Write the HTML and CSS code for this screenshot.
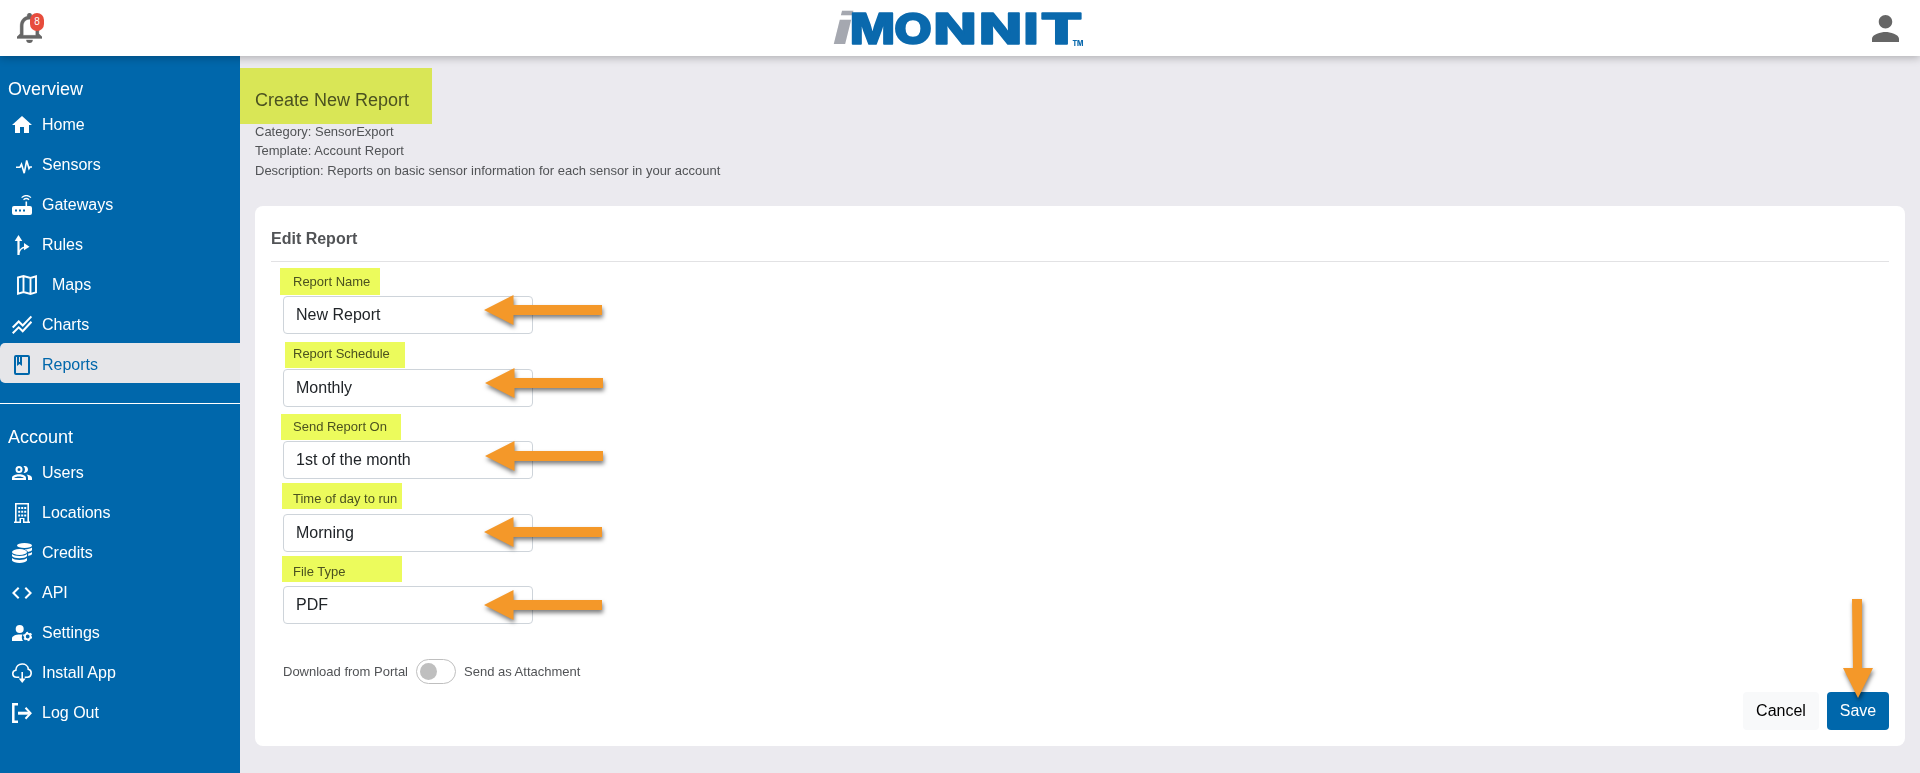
FILE: index.html
```html
<!DOCTYPE html>
<html lang="en">
<head>
  <meta charset="UTF-8" />
  <meta name="viewport" content="width=device-width, initial-scale=1" />
  <title>iMonnit - Create New Report</title>
  <link rel="stylesheet" href="styles.css">
</head>
<body>

  <header class="topbar">
    <div class="alerts">
      <svg class="bell" viewBox="4 2.5 16 19.5" preserveAspectRatio="none"><path d="M12 22c1.1 0 2-.9 2-2h-4c0 1.1.9 2 2 2zm6-6v-5c0-3.07-1.63-5.64-4.5-6.32V4c0-.83-.67-1.5-1.5-1.5s-1.5.67-1.5 1.5v.68C7.64 5.36 6 7.92 6 11v5l-2 2v1h16v-1l-2-2zm-2 1H8v-6c0-2.48 1.51-4.5 4-4.5s4 2.02 4 4.5v6z"/></svg>
      <span class="badge">8</span>
    </div>
    <svg class="logo" viewBox="0 0 252 40">
      <text class="logo-i" transform="translate(0 35) skewX(-14)" x="-4" y="0" textLength="23" lengthAdjust="spacingAndGlyphs">i</text>
      <g class="logo-word">
        <text x="18" y="35" textLength="45" lengthAdjust="spacingAndGlyphs">M</text>
        <text x="62" y="35" textLength="38" lengthAdjust="spacingAndGlyphs">O</text>
        <text x="101.500" y="35" textLength="43" lengthAdjust="spacingAndGlyphs">N</text>
        <text x="147" y="35" textLength="43" lengthAdjust="spacingAndGlyphs">N</text>
        <text x="191.500" y="35" textLength="15" lengthAdjust="spacingAndGlyphs">I</text>
        <text x="208.500" y="35" textLength="42" lengthAdjust="spacingAndGlyphs">T</text>
      </g>
      <text class="logo-tm" x="240.500" y="36.5" textLength="11" lengthAdjust="spacingAndGlyphs">TM</text>
    </svg>
    <svg class="user" viewBox="4 4 16 16"><path d="M12 12c2.21 0 4-1.79 4-4s-1.79-4-4-4-4 1.79-4 4 1.79 4 4 4zm0 2c-2.67 0-8 1.34-8 4v2h16v-2c0-2.66-5.33-4-8-4z"/></svg>
  </header>

  <div class="layout">
    <nav class="sidebar">
      <h2 class="nav-title">Overview</h2>
      <ul class="nav-list">
        <li class="nav-item">
          <svg class="icon" viewBox="0 0 20 20"><path d="M8 18v-6h4v6h5v-8h3L10 1 0 10h3v8z"/></svg>
          <span>Home</span>
        </li>
        <li class="nav-item">
          <svg class="icon line" viewBox="0 0 20 20"><path stroke-width="1.600" d="M4 12.200h4l1.500-3 2.700 9L14.700 5.500l2.300 8 1-1.500H20"/></svg>
          <span>Sensors</span>
        </li>
        <li class="nav-item">
          <svg class="icon" viewBox="0 0 20 20"><path fill-rule="evenodd" d="M2 11h11.500V6.500h1.600V11H18a2 2 0 0 1 2 2v5a2 2 0 0 1-2 2H2a2 2 0 0 1-2-2v-5a2 2 0 0 1 2-2zM3 14.500v2h2v-2zm4 0v2h2v-2zm4 0v2h2v-2z"/><path class="stroke" stroke-width="1.200" d="M11.500 4.800q2.800-2.600 5.600 0M9.600 2.600q4.700-4.200 9.400 0"/></svg>
          <span>Gateways</span>
        </li>
        <li class="nav-item">
          <svg class="icon" viewBox="0 0 20 20"><path d="M6.500 0l3.800 6H7.600v9c1-2 2.800-3 4.400-3.200V8l5.500 3.700-5.500 3.500v-2c-2.500.5-4.400 2.500-4.400 6.800H5.400V6H2.700z"/></svg>
          <span>Rules</span>
        </li>
        <li class="nav-item nav-maps">
          <svg class="icon line" viewBox="0 0 20 20"><path stroke-width="1.900" d="M1 2.500L6.500 1l7 2L19 1.300v16L13.500 19l-7-2L1 18.700zM6.500 1v16m7-14v16"/></svg>
          <span>Maps</span>
        </li>
        <li class="nav-item">
          <svg class="icon line" viewBox="0 0 20 20"><path stroke-width="2" d="M.7 12.500l6-6 4 4L19.400 1.500M.7 18.300l6-6 4 4 8.700-9.500"/></svg>
          <span>Charts</span>
        </li>
        <li class="nav-item active">
          <svg class="icon line" viewBox="0 0 20 20"><rect x="3" y="1" width="14" height="18" rx="1" stroke-width="2"/><path class="solid" d="M5 1h5v10L7.500 9 5 11z"/><path class="cut" d="M7.500 2v5"/></svg>
          <span>Reports</span>
        </li>
      </ul>

      <h2 class="nav-title account">Account</h2>
      <ul class="nav-list">
        <li class="nav-item">
          <svg class="icon" viewBox="0 0 20 20"><path fill-rule="evenodd" d="M7 3a3.500 3.500 0 1 1 0 7 3.500 3.500 0 0 1 0-7zm0 2a1.500 1.500 0 1 0 0 3 1.500 1.500 0 0 0 0-3zM0 17v-2c0-5 14-5 14 0v2zm2.200-2h9.600c-1.300-2-8.300-2-9.600 0zM11.500 3.200c6-1.200 6 7.700 0 6.600 2-2 2-4.600 0-6.600zM14.500 11.600c3.500.5 5.500 1.600 5.500 3.400v2h-4v-2c0-1.400-.5-2.500-1.500-3.400z"/></svg>
          <span>Users</span>
        </li>
        <li class="nav-item">
          <svg class="icon" viewBox="0 0 20 20"><path fill-rule="evenodd" d="M3 0h14v18.500h1V20h-7v-4H9v4H2v-1.500h1zM4.600 1.500v17h2.900V15h5v3.500h2.900v-17z"/><path d="M6.200 4h2v2h-2zm3 0h2v2h-2zm3 0h2v2h-2zm-6 3.700h2v2h-2zm3 0h2v2h-2zm3 0h2v2h-2zm-6 3.700h2v2h-2zm3 0h2v2h-2zm3 0h2v2h-2z"/></svg>
          <span>Locations</span>
        </li>
        <li class="nav-item">
          <svg class="icon" viewBox="0 0 20 20"><ellipse cx="12.500" cy="2.500" rx="7.500" ry="2.500"/><ellipse cx="7.500" cy="9" rx="7.500" ry="3"/><path d="M0 11c2 2.500 13 2.500 15 0v2c-1.500 3-13.500 3-15 0zM0 15c2 2.500 13 2.500 15 0v2.500c-1.500 3.300-13.500 3.300-15 0zM20 4.500V7c-.5 1-2 1.500-4 1.900C15.500 7.700 14 6.800 12.500 6.400c3.500-.1 6-.7 7.500-1.900zM20 9v2c-.5 1-2 1.500-3.800 1.900v-2.300C18 10.300 19.300 9.800 20 9z"/></svg>
          <span>Credits</span>
        </li>
        <li class="nav-item">
          <svg class="icon line" viewBox="0 0 20 20"><path stroke-width="2" d="M6.700 4.700L1.400 10l5.300 5.300M13.300 4.700l5.300 5.300-5.300 5.300"/></svg>
          <span>API</span>
        </li>
        <li class="nav-item">
          <svg class="icon" viewBox="0 0 20 20"><circle cx="7.700" cy="6" r="4"/><path d="M0 18v-2.500c0-3 5-4.500 10.500-3.900-1 2-.9 4.500.5 6.400z"/><circle class="stroke" cx="15.700" cy="13.500" r="2.800" stroke-width="1.800"/><circle class="stroke" cx="15.700" cy="13.500" r="4" stroke-width="1.300" stroke-dasharray="2 2.190"/></svg>
          <span>Settings</span>
        </li>
        <li class="nav-item">
          <svg class="icon line" viewBox="0 0 20 20"><path stroke-width="1.600" d="M7.300 14.200H4.500C-.3 14-.3 7.800 3.800 7.300 4-.9 16-.9 16.300 6.300c4 .8 3.900 7.500-.8 7.900h-2.800M10.200 9v8"/><path class="solid" d="M6.700 15.500h7L10.200 20z"/></svg>
          <span>Install App</span>
        </li>
        <li class="nav-item">
          <svg class="icon line" viewBox="0 0 20 20"><path stroke-width="2.500" d="M6 1.300H1.300v17.400H6"/><path stroke-width="3" d="M6 10.200h11"/><path stroke-width="2" d="M13.500 4.700l5.100 5.500-5.100 5.500"/></svg>
          <span>Log Out</span>
        </li>
      </ul>
    </nav>

    <main class="content">
      <h1 class="page-title">Create New Report<span class="mark mark-title"></span></h1>
      <div class="report-info">
        <div>Category: SensorExport</div>
        <div>Template: Account Report</div>
        <div>Description: Reports on basic sensor information for each sensor in your account</div>
      </div>

      <form class="card">
        <h2 class="card-title">Edit Report</h2>

        <div class="field">
          <label for="name">Report Name</label>
          <input id="name" type="text" value="New Report">
          <span class="mark mark-name"></span>
          <svg class="arrow" viewBox="0 0 118 30"><path d="M0 15L29.500 0v10H118v10H29.500v10z"/></svg>
        </div>
        <div class="field">
          <label for="schedule">Report Schedule</label>
          <select id="schedule"><option>Monthly</option></select>
          <span class="mark mark-schedule"></span>
          <svg class="arrow shifted" viewBox="0 0 118 30"><path d="M0 15L29.500 0v10H118v10H29.500v10z"/></svg>
        </div>
        <div class="field">
          <label for="day">Send Report On</label>
          <select id="day"><option>1st of the month</option></select>
          <span class="mark mark-day"></span>
          <svg class="arrow shifted" viewBox="0 0 118 30"><path d="M0 15L29.500 0v10H118v10H29.500v10z"/></svg>
        </div>
        <div class="field">
          <label for="time">Time of day to run</label>
          <select id="time"><option>Morning</option></select>
          <span class="mark mark-time"></span>
          <svg class="arrow lower" viewBox="0 0 118 30"><path d="M0 15L29.500 0v10H118v10H29.500v10z"/></svg>
        </div>
        <div class="field">
          <label for="type">File Type</label>
          <select id="type"><option>PDF</option></select>
          <span class="mark mark-type"></span>
          <svg class="arrow lower" viewBox="0 0 118 30"><path d="M0 15L29.500 0v10H118v10H29.500v10z"/></svg>
        </div>

        <div class="delivery">
          <span>Download from Portal</span>
          <span class="toggle"></span>
          <span>Send as Attachment</span>
        </div>

        <div class="actions">
          <button type="button" class="btn cancel">Cancel</button>
          <button type="button" class="btn save">Save</button>
          <svg class="arrow-down" viewBox="0 0 30 99"><path d="M9 0h10v69h11L15 99 0 69h10z"/></svg>
        </div>
      </form>
    </main>
  </div>

</body>
</html>
```

FILE: styles.css
```css
* {
  box-sizing: border-box;
}

body {
  margin: 0;
  height: 100vh;
  display: flex;
  flex-direction: column;
  overflow: hidden;
  background: #ebeaef;
  color: #515356;
  font-family: Arial, "Liberation Sans", sans-serif;
  font-size: 13px;
  line-height: 19.5px;
}

h1, h2, ul {
  margin: 0;
  padding: 0;
  font-weight: normal;
}

/* top bar */
.topbar {
  position: relative;
  z-index: 2;
  flex: none;
  display: flex;
  align-items: center;
  justify-content: space-between;
  height: 56px;
  padding: 0 21px 0 17px;
  background: #fff;
  box-shadow: 0 2px 8px rgba(0, 0, 0, 0.25);
}

.alerts {
  position: relative;
  width: 27px;
  height: 30px;
}

.bell {
  display: block;
  width: 25px;
  height: 30px;
  fill: #666;
  stroke: #666;
  stroke-width: 0.2;
}

.badge {
  position: absolute;
  left: 13px;
  top: 0;
  width: 14px;
  height: 18px;
  border-radius: 7px;
  background: #e74c3c;
  color: #fff;
  font-size: 10px;
  line-height: 18px;
  text-align: center;
}

.logo {
  width: 252px;
  height: 40px;
  margin-top: 1px;
  overflow: visible;
}

.logo text {
  font-family: Inter, "Open Sans", sans-serif;
  font-weight: 800;
  font-size: 43px;
}

.logo .logo-i {
  fill: #a5a8b0;
  font-family: "Liberation Sans", Arial, sans-serif;
  font-size: 46px;
}

.logo-word {
  fill: #0a69ad;
  stroke: #0a69ad;
  stroke-width: 1.6;
  stroke-linejoin: round;
}

.logo .logo-tm {
  fill: #0a69ad;
  font-size: 7px;
}

.user {
  width: 27px;
  height: 27px;
  fill: #666;
}

/* sidebar */
.layout {
  flex: 1;
  display: flex;
}

.sidebar {
  flex: none;
  width: 240px;
  padding-top: 19px;
  background: #0067ab;
  color: #fff;
}

.nav-title {
  height: 28px;
  padding-left: 8px;
  font-size: 18px;
  line-height: 29px;
}

.nav-title.account {
  height: 48px;
  margin-top: 20px;
  padding-top: 19px;
  border-top: 1px solid #fff;
}

.nav-list {
  list-style: none;
}

.nav-item {
  display: flex;
  align-items: center;
  gap: 10px;
  height: 40px;
  padding-left: 12px;
  border-radius: 5px 0 0 5px;
  font-size: 16px;
  line-height: 24px;
}

.nav-item span {
  margin-top: 4px;
}

.nav-maps {
  gap: 15px;
  padding-left: 17px;
}

.nav-item.active {
  background: #e6e6e9;
  color: #0067ab;
}

.icon {
  width: 20px;
  height: 20px;
  margin-top: 4px;
  fill: currentColor;
}

.icon.line,
.icon .stroke {
  fill: none;
  stroke: currentColor;
}

.icon .solid {
  fill: currentColor;
  stroke: none;
}

.icon .cut {
  stroke: #e6e6e9;
  stroke-width: 1;
}

/* page */
.content {
  flex: 1;
  padding: 30px 15px 27px;
}

.page-title {
  position: relative;
  height: 35px;
  font-size: 18px;
  line-height: 29px;
}

.report-info {
  padding-top: 0.9px;
  height: 85px;
}

.card {
  display: flex;
  flex-direction: column;
  height: 540px;
  padding: 16px;
  border-radius: 8px;
  background: #fff;
}

.card-title {
  height: 40px;
  margin-bottom: 9.5px;
  padding-top: 5px;
  border-bottom: 1px solid #e2e2e4;
  font-size: 16px;
  font-weight: bold;
  line-height: 24px;
}

.field {
  position: relative;
  width: 250px;
  height: 72.5px;
  margin-left: 12px;
}

.field label {
  display: block;
  height: 24.5px;
  padding-left: 10px;
}

.field input,
.field select {
  display: block;
  width: 250px;
  height: 38px;
  padding: 0 12px;
  appearance: none;
  border: 1px solid #ced4da;
  border-radius: 4px;
  background: #fff;
  color: #212529;
  font-family: inherit;
  font-size: 16px;
}

.field select {
  padding-bottom: 1px;
}

.delivery {
  display: flex;
  align-items: center;
  height: 26px;
  margin: 24.5px 0 0 12px;
}

.toggle {
  width: 40px;
  height: 25px;
  margin: 0 8px;
  padding: 3px;
  border: 1px solid #bfbfbf;
  border-radius: 13px;
}

.toggle::before {
  content: "";
  display: block;
  width: 17px;
  height: 17px;
  border-radius: 50%;
  background: #bfbfbf;
}

.actions {
  position: relative;
  display: flex;
  justify-content: flex-end;
  gap: 8px;
  margin-top: auto;
}

.btn {
  height: 38px;
  padding: 0 13px;
  border: none;
  border-radius: 4px;
  font-family: inherit;
  font-size: 16px;
}

.cancel {
  width: 76px;
  background: #f8f9fa;
  color: #000;
}

.save {
  width: 62px;
  padding: 0 12px;
  background: #0067ab;
  color: #fff;
}

/* highlighter marks */
.mark {
  position: absolute;
  width: 120px;
  height: 26px;
  background: #ecfb5c;
  mix-blend-mode: multiply;
}

.mark-title {
  left: -15px;
  top: -18px;
  width: 192px;
  height: 56px;
}

.mark-name {
  left: -3px;
  top: -3.5px;
  width: 100px;
  height: 27px;
}

.mark-schedule {
  left: 2px;
  top: -2px;
}

.mark-day {
  left: -2px;
  top: -2.5px;
}

.mark-time {
  left: -1px;
  top: -6px;
}

.mark-type {
  left: -1px;
  top: -5.5px;
}

/* pointer arrows */
.arrow {
  position: absolute;
  left: 201px;
  top: 23.5px;
  width: 118px;
  height: 30px;
}

.arrow.shifted {
  left: 202px;
  top: 24px;
}

.arrow.lower {
  top: 28px;
}

.arrow-down {
  position: absolute;
  right: 16px;
  top: -93px;
  width: 30px;
  height: 99px;
}

.arrow,
.arrow-down {
  overflow: visible;
  fill: #f49829;
  filter: drop-shadow(1px 3px 2px rgba(0, 0, 0, 0.5));
}
```
